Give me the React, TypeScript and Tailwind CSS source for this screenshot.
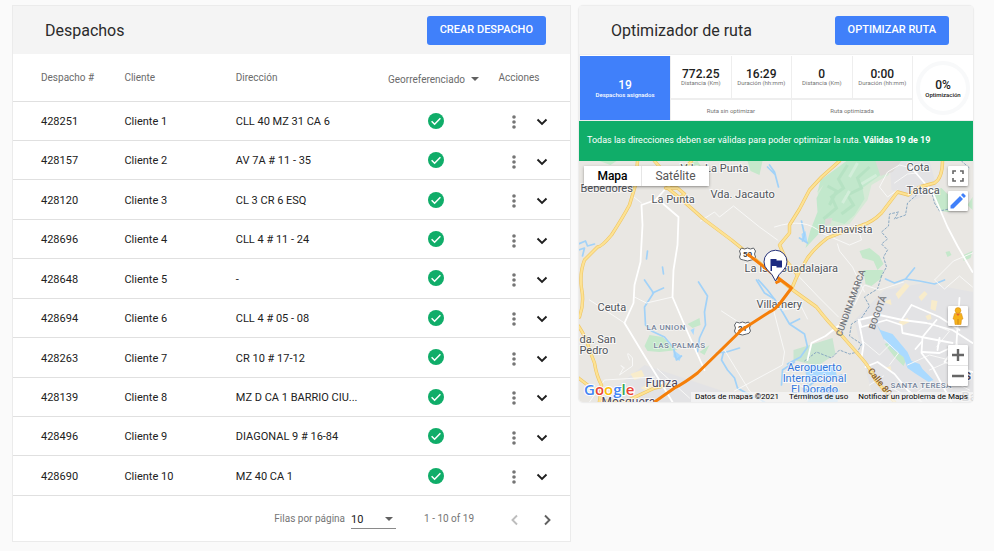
import type { ReactNode } from "react";

type Dispatch = { id: string; client: string; address: string };

const dispatches: Dispatch[] = [
  { id: "428251", client: "Cliente 1", address: "CLL 40 MZ 31 CA 6" },
  { id: "428157", client: "Cliente 2", address: "AV 7A # 11 - 35" },
  { id: "428120", client: "Cliente 3", address: "CL 3 CR 6 ESQ" },
  { id: "428696", client: "Cliente 4", address: "CLL 4 # 11 - 24" },
  { id: "428648", client: "Cliente 5", address: "-" },
  { id: "428694", client: "Cliente 6", address: "CLL 4 # 05 - 08" },
  { id: "428263", client: "Cliente 7", address: "CR 10 # 17-12" },
  { id: "428139", client: "Cliente 8", address: "MZ D CA 1 BARRIO CIU..." },
  { id: "428496", client: "Cliente 9", address: "DIAGONAL 9 # 16-84" },
  { id: "428690", client: "Cliente 10", address: "MZ 40 CA 1" },
];

function CheckIcon() {
  return (
    <svg viewBox="0 0 16 16" className="mx-auto size-4" role="img" aria-label="Georreferenciado">
      <circle cx="8" cy="8" r="8" fill="#10ad69" />
      <path d="M3.6 8.2l3 3 5.8-6" fill="none" stroke="#fff" strokeWidth="1.5" />
    </svg>
  );
}

function Chevron({ d, className }: { d: string; className: string }) {
  return (
    <svg viewBox="0 0 12 12" className={className} fill="none" stroke="currentColor" aria-hidden="true">
      <path d={d} strokeWidth="1.9" />
    </svg>
  );
}

function CardHeader({ title, action }: { title: string; action: string }) {
  return (
    <header className="flex h-12 items-center justify-between bg-[#f4f4f4] pr-6 pl-8">
      <h2 className="pt-px text-base text-[#2b2b2b]">{title}</h2>
      <button type="button" className="h-[29px] rounded-[3px] bg-[#4080fa] px-[13px] text-[11px] font-medium text-white">
        {action}
      </button>
    </header>
  );
}

function DispatchCard() {
  return (
    <section className="border border-[#ebebeb] bg-white">
      <CardHeader title="Despachos" action="CREAR DESPACHO" />
      <table className="h-[442px] w-full table-fixed border-collapse text-left text-[11px] text-[#212121]">
        <colgroup>
          <col className="w-[20%]" />
          <col className="w-[20%]" />
          <col className="w-[26%]" />
          <col className="w-[19%]" />
          <col className="w-[15%]" />
        </colgroup>
        <thead>
          <tr className="h-[47px] border-b border-[#e0e0e0] text-[10px] text-[#6b6b6b]">
            <th className="pl-7 font-normal">Despacho #</th>
            <th className="font-normal">Cliente</th>
            <th className="font-normal">Dirección</th>
            <th className="font-normal">
              <button type="button" className="flex w-full items-center justify-center gap-[6px] pt-1">
                Georreferenciado
                <svg viewBox="0 0 8 4" className="h-1 w-2 shrink-0" fill="#616161" aria-hidden="true">
                  <path d="M0 0h8L4 4z" />
                </svg>
              </button>
            </th>
            <th className="pl-3 font-normal">Acciones</th>
          </tr>
        </thead>
        <tbody>
          {dispatches.map((row) => (
            <tr key={row.id} className="border-b border-[#e0e0e0]">
              <td className="pt-[3px] pl-7">{row.id}</td>
              <td className="pt-[3px]">{row.client}</td>
              <td className="pt-[3px]">{row.address}</td>
              <td className="pl-1">
                <CheckIcon />
              </td>
              <td className="pt-[3px]">
                <div className="flex items-center gap-5 pl-[26px]">
                  <button type="button" aria-label={"Opciones " + row.id}>
                    <svg viewBox="0 0 4 14" className="h-[14px] w-1" fill="#757575">
                      <circle cx="2" cy="2" r="1.8" />
                      <circle cx="2" cy="7" r="1.8" />
                      <circle cx="2" cy="12" r="1.8" />
                    </svg>
                  </button>
                  <button type="button" aria-label={"Expandir " + row.id}>
                    <Chevron d="M1.5 3.5L6 8l4.500-4.500" className="size-3 text-[#1f1f1f]" />
                  </button>
                </div>
              </td>
            </tr>
          ))}
        </tbody>
      </table>
      <footer className="flex h-[45px] items-center justify-end pr-[17px] text-[10px] text-[#757575]">
        <label htmlFor="rows" className="mr-[6px]">
          Filas por página
        </label>
        <div className="relative mr-7">
          <select
            id="rows"
            defaultValue="10"
            className="h-5 w-[45px] appearance-none rounded-none border-b border-[#8a8a8a] bg-transparent pt-[3px] text-[11px] text-[#212121]"
          >
            <option>10</option>
            <option>25</option>
            <option>50</option>
          </select>
          <svg viewBox="0 0 8 4" className="pointer-events-none absolute top-2 right-[3px] h-1 w-2" fill="#616161" aria-hidden="true">
            <path d="M0 0h8L4 4z" />
          </svg>
        </div>
        <span className="mr-[35px]">1 - 10 of 19</span>
        <button type="button" aria-label="Página anterior" disabled className="mr-5 pt-[2px] text-[#bdbdbd]">
          <Chevron d="M8 1.500L3.500 6 8 10.500" className="size-3" />
        </button>
        <button type="button" aria-label="Página siguiente" className="pt-[2px] text-[#616161]">
          <Chevron d="M4 1.500L8.500 6 4 10.500" className="size-3" />
        </button>
      </footer>
    </section>
  );
}

function Stat({ value, label }: { value: string; label: string }) {
  return (
    <div className="flex flex-1 flex-col items-center justify-center border-r border-[#eeeeee] text-center">
      <strong className="text-[12px] leading-3 font-medium text-[#212121]">{value}</strong>
      <span className="text-[6px] leading-[6px] whitespace-nowrap text-[#757575]">{label}</span>
    </div>
  );
}

function StatGroup({ title, children }: { title: string; children: ReactNode }) {
  return (
    <div className="flex flex-1 flex-col">
      <div className="flex h-11 border-b-2 border-[#eeeeee]">{children}</div>
      <div className="flex flex-1 items-center justify-center border-r border-[#eeeeee] text-[6px] text-[#757575]">{title}</div>
    </div>
  );
}

function Stats() {
  return (
    <div className="flex h-[67px] border-y border-l border-[#eeeeee] bg-white pt-px">
      <div className="flex w-[91px] flex-col items-center justify-center border-r border-[#eeeeee] bg-[#4080fa] text-white">
        <strong className="text-[12px] leading-3 font-medium">19</strong>
        <span className="text-[6px] leading-[7px] font-medium">Despachos asignados</span>
      </div>
      <StatGroup title="Ruta sin optimizar">
        <Stat value="772.25" label="Distancia (Km)" />
        <Stat value="16:29" label="Duración (hh:mm)" />
      </StatGroup>
      <StatGroup title="Ruta optimizada">
        <Stat value="0" label="Distancia (Km)" />
        <Stat value="0:00" label="Duración (hh:mm)" />
      </StatGroup>
      <div className="flex w-[60px] items-center justify-center">
        <div className="flex size-[54px] flex-col items-center justify-center rounded-full border-4 border-[#f8f9fa] text-[#212121]">
          <strong className="text-[12px] leading-3 font-medium">0%</strong>
          <span className="text-[6px] leading-[7px] font-medium">Optimización</span>
        </div>
      </div>
    </div>
  );
}

const highways = [
  "M638 161L636 185 630 205Q623 218 612 235Q602 247 598 247L585 260Q580 273 582 288Q585 303 580 317",
  "M579 326Q587 338 590 350L595 363Q597 376 602 385L600 402",
  "M579 378L596 391",
  "M655 161L675 184M692 161L668 188M666 188L678 188 685 194 678 200",
  "M668 188L678 196 704 219 732 240 748 253 792 289 817 307Q830 324 840 333L862 358Q870 367 876 380L895 402",
  "M840 161L822 177 810 190 800 209 790 225 790 233 780 245 787 261 798 275",
  "M943 161Q943 178 935 183L920 187 909 195 898 192 882 213Q873 222 863 225Q848 230 828 238Q815 248 808 258L798 275 792 289",
  "M600 401L625 402 655 388 668 385",
];

const mainRoads = [
  "M665 190L656 200 642 205 643 225 641 262 635 285 634 303 625 323 645 356 658 377 673 402",
  "M658 198L665 205 679 217 678 245 674 270 673 297 688 332 705 370",
  "M912 168L933 192 948 227 958 246 973 272",
  "M857 280L852 300 840 325 826 336 812 343 808 360",
  "M862 358L864 345 859 320 880 315 903 320 927 323 953 330 973 343",
  "M860 321L862 327 887 320 902 325 903 333 927 338 953 343",
  "M912 305L940 317 960 330M912 305L902 320",
  "M937 320L923 337 922 353 933 367 940 380 952 402",
  "M960 298L957 343 960 358M923 352L940 353 957 345M940 338L938 350",
  "M957 345L945 362 973 372M922 342L916 349",
  "M866 367L878 362 895 374 908 390 922 402",
];

const minorRoads = [
  "M798 275L818 296 839 317M635 297L647 303 673 297M590 300L604 309 625 323",
  "M632 195L642 203M701 221L715 212 720 217 734 206 760 227 778 240",
  "M630 360Q625 348 633 358L633 366 620 375 624 368Q618 363 625 368",
  "M722 311L742 324M725 350L750 391 762 402",
  "M774 310L785 352 783 365 735 391",
  "M590 402L605 380 655 377M658 369L690 398",
  "M775 227Q806 217 822 233L850 245 862 240 860 233M838 244L840 251 853 267 865 292",
  "M898 190L888 197 880 187 888 172 900 165 912 168M895 183L908 174 918 173",
  "M973 253L954 261 935 280 945 289 960 276 973 287",
  "M783 310L802 307 808 319M785 380L815 391",
  "M855 305L865 285 880 290 904 282M862 340L880 355 890 345",
  "M885 340L899 353 890 365M930 323L950 331 937 347",
  "M908 365L930 355 950 360M918 392L932 382 940 388M958 358L950 380 970 390",
  "M880 402L893 388 905 395M870 385L884 376M930 370L948 362",
];

const streams = [
  "M579 244L586 241 588 246 595 244M579 250L585 248 583 256",
  "M648 251L647 259M663 267L664 274",
  "M645 280L654 293 645 307 646 325 652 331 665 337 674 348 677 360 682 356",
  "M653 293L664 288",
  "M699 282L708 296 705 312 706 325 700 338 698 352",
  "M717 353L727 352 740 348M724 352L722 360 728 370 735 378 738 388 750 395 765 402",
  "M757 280L765 293 775 299 783 312 790 324 800 319M790 324L805 334 808 347 801 357 788 364",
  "M759 280L768 290 774 298",
  "M770 165L775 172 779 187M768 167L776 175",
  "M886 279L895 283 906 279 915 268M906 279L920 281 935 284 945 280",
  "M802 221L805 235 803 241M800 238L808 243",
  "M805 389L820 378 827 382 842 375",
  "M782 385L783 370 795 362",
];

const borders = [
  "M962 161L970 168M917 195L908 203 906 215 895 219 899 212 890 214 889 226 882 232 888 239 882 244 888 250 884 257 887 267 882 276",
  "M933 195L935 203 940 211 954 208",
  "M882 276L878 289 865 297 870 306 862 318 852 324 850 336 862 344 858 352 850 354 840 350 832 358 817 352 805 361",
];

const townLabels: { x: number; y: number; text: string; anchor?: "middle" }[] = [
  { x: 581, y: 192, text: "Bebedores" },
  { x: 681, y: 172, text: "Vda. La Punta" },
  { x: 652, y: 203, text: "La Punta" },
  { x: 711, y: 198, text: "Vda. Jacauto" },
  { x: 745, y: 272, text: "La Isla" },
  { x: 780, y: 272, text: "Guadalajara" },
  { x: 757, y: 308, text: "Villamery" },
  { x: 819, y: 233, text: "Buenavista" },
  { x: 907, y: 171, text: "Cota" },
  { x: 907, y: 194, text: "Tataca" },
  { x: 598, y: 311, text: "Ceuta" },
  { x: 580, y: 343, text: "da. San" },
  { x: 580, y: 354, text: "Pedro" },
  { x: 815, y: 371, text: "Aeropuerto", anchor: "middle" },
  { x: 815, y: 382, text: "Internacional", anchor: "middle" },
  { x: 815, y: 393, text: "El Dorado", anchor: "middle" },
];

function Shield({ x, y, text }: { x: number; y: number; text: string }) {
  return (
    <g>
      <path
        d={`M${x - 6} ${y - 6}q3 2 6 0q3 2 6 0l2 3q-2 3 0 6q-1 3-4 3l-4 1l-4-1q-4 0-4-3q2-3 0-6z`}
        fill="#fff"
        stroke="#5f6368"
        strokeWidth="1"
      />
      <text x={x} y={y + 3} textAnchor="middle" className="fill-[#3c4043] text-[8px] font-bold">
        {text}
      </text>
    </g>
  );
}

function MapDrawing() {
  return (
    <svg
      viewBox="579 161 395 241"
      preserveAspectRatio="xMidYMid slice"
      className="block h-[241px] w-full"
      role="img"
      aria-label="Mapa de la ruta"
    >
      <rect x="379" y="61" width="800" height="441" fill="#e9e7e3" />
      <path d="M645 365L690 380 735 395 735 402H600L615 388zM890 161L930 161 938 190 915 200 892 190zM855 320L885 290 925 283 974 292V402H875L865 365z" fill="#e3e3e5" />
      <path d="M847 161L893 161 889 175 872 185 868 200 850 224 825 228 819 205 818 191z" fill="#d5ead6" />
      <path
        d="M847 161L878 161 881 175 863 188 865 199 855 215 845 224 828 219 820 233 806 248 811 230 818 212 817 198 824 185 818 192 821 180z"
        fill="#c2e8cc"
      />
      <path d="M848 165L839 179 844 188 832 197 837 208 824 219M870 167L858 178 862 188 848 195 854 205 842 214M828 186L837 191 830 205" fill="none" stroke="#b0dfbf" strokeWidth="3" strokeOpacity="0.7" />
      <path d="M858 163L850 177M877 175L862 184M850 191L843 203" stroke="#d3eeda" strokeWidth="3" />
      <path d="M876 161H902L893 172 881 176zM826 219L833 218 831 224 825 226z" fill="#dcd9d7" />
      <path
        d="M600 161H617L611 165zM684 165L698 161 706 173zM748 161H763L760 175 751 171zM645 346L650 335 663 337 678 350 660 352 648 351zM688 324L700 318 701 325 693 328zM700 352L710 345 705 355zM860 251L870 248 880 256 884 264 878 270 874 261 863 258zM864 270H884L882 278 872 286 866 284zM932 191L942 188 954 200 950 212 940 211zM964 255L973 251 971 258 964 261zM946 252L950 251 952 255 948 257zM973 197V210L968 205zM885 344L890 342 907 359 904 366 895 357z"
        fill="#c5e8cb"
      />
      <path d="M794 350L833 338 836 354 818 366 794 360z" fill="#c9e5d0" />
      <path
        d="M877 324L881 330 893 334 908 352 912 361 920 364 923 369 934 380 929 382 915 373 908 368 904 357 893 349 884 339zM674 350L682 356 680 361 674 357zM805 366L835 366 838 378 820 375 808 384zM808 393L823 386 840 390 838 402 808 402zM691 330L695 328 694 335zM802 234L806 231 808 243 803 240z"
        fill="#aadaff"
      />
      <path d="M803 388H813L812 398H804zM822 388L837 388 835 396 821 396z" fill="#8ebff2" />
      <path
        d="M896 294L906 283 910 286 899 299zM884 302L891 299 892 305zM899 322L908 318 910 322 902 326zM919 297L925 291 928 294 922 301zM932 300L938 301 936 311 931 309zM926 316L931 314 932 319 928 320zM631 374L642 370 645 376 635 380zM641 388L654 382 650 392zM886 368L891 366 892 371z"
        fill="#f8eccb"
      />
      <g fill="none" strokeLinejoin="round" strokeLinecap="round">
        {streams.map((d) => (
          <path key={d} d={d} stroke="#a2d2f8" strokeWidth="1.7" />
        ))}
        {borders.map((d) => (
          <path key={d} d={d} stroke="#8aa8c2" strokeWidth="1" strokeDasharray="2 2" />
        ))}
        {minorRoads.map((d) => (
          <path key={d} d={d} stroke="#f8f8f7" strokeWidth="1" />
        ))}
        {mainRoads.map((d) => (
          <path key={d} d={d} stroke="#ffffff" strokeWidth="1.8" />
        ))}
        {highways.map((d) => (
          <path key={d} d={d} stroke="#eec564" strokeWidth="3.4" />
        ))}
        {highways.map((d) => (
          <path key={d} d={d} stroke="#fde293" strokeWidth="2.2" />
        ))}
      </g>
      <Shield x={748} y={254} text="50" />
      <Shield x={743} y={328} text="21" />
      <g className="fill-[#50545a] text-[11px]" stroke="#fff" strokeWidth="2" strokeOpacity="0.7" paintOrder="stroke">
        {townLabels.map((label) => (
          <text
            key={label.text}
            x={label.x}
            y={label.y}
            textAnchor={label.anchor}
            className={label.anchor ? "fill-[#3578dc]" : undefined}
          >
            {label.text}
          </text>
        ))}
        <text x="646" y="387" className="fill-[#4a4660] text-[12px]">Funza</text>
        <text x="602" y="406" className="fill-[#4a4660] text-[12px]">Mosquera</text>
        <text x="957" y="380" className="fill-[#4a4660] text-[14px] font-medium">as</text>
        <text x="962" y="401" className="fill-[#8b8f95] text-[13px] font-medium">Ba</text>
      </g>
      <g className="fill-[#74839a] text-[8px] font-medium tracking-wider" stroke="#fff" strokeWidth="1.5" strokeOpacity="0.6" paintOrder="stroke">
        <text x="647" y="330">LA UNION</text>
        <text x="654" y="348">LAS PALMAS</text>
        <text x="891" y="388">SANTA TERESA</text>
      </g>
      <g className="fill-[#74777c] text-[9px] font-medium">
        <text transform="translate(842 337) rotate(-70)">CUNDINAMARCA</text>
        <text transform="translate(875 330) rotate(-70)">BOGOTÁ</text>
        <text transform="translate(868 371) rotate(52)" className="fill-[#87602c]">Calle 80</text>
      </g>
      <path
        d="M748 254L776 276 792 288 780 304Q775 310 770 312L742 330 698 373Q685 383 675 388L655 402M776 283L782 280"
        fill="none"
        stroke="#f57f0a"
        strokeWidth="3"
        strokeLinejoin="round"
      />
      <path d="M776 281Q773 274 768 270A11.500 11.500 0 1 1 784 270Q779 274 776 281z" fill="#fff" stroke="#26327a" strokeWidth="1" />
      <path d="M771 259h6v1.500h5.500v7h-5.500v-1.500h-4.500v5h-1.500z" fill="#1c2a80" />
    </svg>
  );
}

const logoLetters = [
  { letter: "G", className: "fill-[#4285f4]" },
  { letter: "o", className: "fill-[#ea4335]" },
  { letter: "o", className: "fill-[#fbbc05]" },
  { letter: "g", className: "fill-[#4285f4]" },
  { letter: "l", className: "fill-[#34a853]" },
  { letter: "e", className: "fill-[#ea4335]" },
];

const controlClass = "flex size-5 items-center justify-center rounded-[1px] bg-white shadow-sm shadow-black/30";

function RouteMap() {
  return (
    <div className="relative overflow-hidden rounded-b-sm">
      <MapDrawing />
      <div className="absolute top-[5px] left-[5px] flex h-5 bg-white text-[12px] shadow-sm shadow-black/30">
        <button type="button" className="w-[58px] border-r border-[#e6e6e6] font-medium text-black">
          Mapa
        </button>
        <button type="button" className="w-[67px] text-[#565656]">
          Satélite
        </button>
      </div>
      <div className="absolute top-[5px] right-[5px] flex flex-col gap-[5px]">
        <button type="button" aria-label="Pantalla completa" className={controlClass}>
          <svg viewBox="0 0 12 12" className="size-3" fill="none" stroke="#666" strokeWidth="1.600">
            <path d="M1 4V1h3M8 1h3v3M11 8v3H8M4 11H1V8" />
          </svg>
        </button>
        <button type="button" aria-label="Editar ruta" className={controlClass}>
          <svg viewBox="0 0 16 16" className="size-4" fill="#4080fa">
            <path d="M0.500 12.500L10 3l3 3L3.500 15.500h-3zM11 2L12.500 0.500q0.500-0.500 1 0L15.500 2.500q0.500 0.500 0 1L14 5z" />
          </svg>
        </button>
      </div>
      <div className="absolute right-[5px] bottom-[16px] flex flex-col gap-[19px]">
        <button type="button" aria-label="Street View" className={controlClass}>
          <svg viewBox="0 0 12 18" className="h-[18px] w-3">
            <path d="M2.500 6.500h7l1.500 5.500-1.500 0.500L9 17.500H3L2.500 12.500 1 12z" fill="#f6b21a" stroke="#d58b13" strokeWidth="0.500" />
            <path d="M6 12v5.500" stroke="#c77d12" strokeWidth="0.800" />
            <circle cx="6" cy="3.500" r="2.900" fill="#f6b21a" stroke="#d58b13" strokeWidth="0.500" />
            <path d="M4 6.800h4L6 9z" fill="#e8622a" />
          </svg>
        </button>
        <div className="flex flex-col rounded-[1px] bg-white shadow-sm shadow-black/30">
          <button type="button" aria-label="Acercar" className="flex h-[21px] w-5 items-center justify-center border-b border-[#e6e6e6]">
            <svg viewBox="0 0 12 12" className="size-3" stroke="#666" strokeWidth="2.400">
              <path d="M0 6h12M6 0v12" />
            </svg>
          </button>
          <button type="button" aria-label="Alejar" className="flex h-5 w-5 items-center justify-center">
            <svg viewBox="0 0 12 12" className="size-3" stroke="#666" strokeWidth="2.400">
              <path d="M0 6h12" />
            </svg>
          </button>
        </div>
      </div>
      <svg viewBox="0 0 56 22" className="absolute bottom-0 left-1 h-[22px] w-14" role="img" aria-label="Google">
        <text x="1" y="15" className="font-['Open_Sans',sans-serif] text-[15px] font-semibold" stroke="#fff" strokeWidth="2" paintOrder="stroke">
          {logoLetters.map((item, index) => (
            <tspan key={index} className={item.className}>
              {item.letter}
            </tspan>
          ))}
        </text>
      </svg>
      <div className="absolute right-0 bottom-0 flex h-[10px] items-center gap-[10px] bg-[#f5f5f5]/75 pr-[5px] pl-1 text-[8px] leading-[10px] text-black">
        <span>Datos de mapas ©2021</span>
        <a href="#terminos">Términos de uso</a>
        <a href="#problema">Notificar un problema de Maps</a>
      </div>
    </div>
  );
}

function RouteCard() {
  return (
    <section className="rounded-sm bg-white shadow-[0_0_1px_1px_#ebebeb]">
      <CardHeader title="Optimizador de ruta" action="OPTIMIZAR RUTA" />
      <Stats />
      <p className="flex h-10 items-center bg-[#10ad69] px-2 text-[9px] text-white">
        <span>
          Todas las direcciones deben ser válidas para poder optimizar la ruta. <b>Válidas 19 de 19</b>
        </span>
      </p>
      <RouteMap />
    </section>
  );
}

export default function App() {
  return (
    <main className="min-h-screen bg-[#fafafa] font-[Roboto,sans-serif]">
      <div className="grid grid-cols-[559fr_394fr] items-start gap-2 pt-[5px] pr-[21px] pb-2 pl-3">
        <DispatchCard />
        <div className="pt-px">
          <RouteCard />
        </div>
      </div>
    </main>
  );
}
